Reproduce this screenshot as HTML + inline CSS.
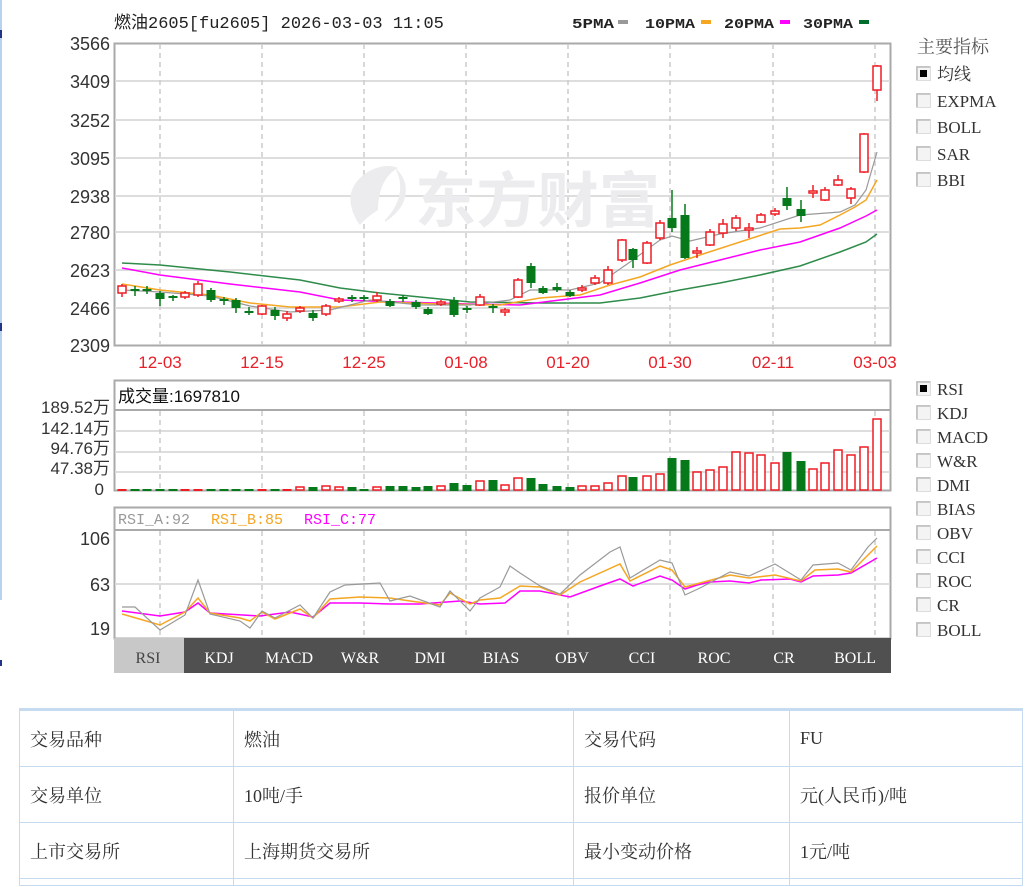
<!DOCTYPE html>
<html><head><meta charset="utf-8">
<style>
html,body{margin:0;padding:0;background:#fff;width:1032px;height:887px;overflow:hidden;position:relative;font-family:"Liberation Sans","Noto Sans CJK SC",sans-serif;}
svg{position:absolute;left:0;top:0}
table{position:absolute;left:19px;top:708px;border-collapse:collapse;font-family:"Liberation Serif","Noto Serif CJK SC",serif;font-size:18px;color:#333;}
td{border:1px solid #c6dbef;height:55px;padding:0 0 0 10px;}
tr:first-child td{border-top:3px solid #c6dbef}
tr:last-child td{height:6px}
</style></head><body>
<svg id="s" width="1032" height="887" xmlns="http://www.w3.org/2000/svg" font-family="Liberation Sans, Noto Sans CJK SC, sans-serif">
<line x1="1" y1="0" x2="1" y2="600" stroke="#b8d2ee" stroke-width="2"/>
<rect x="0" y="30" width="2" height="8" fill="#223388"/>
<rect x="0" y="323" width="2" height="8" fill="#223388"/>
<rect x="0" y="660" width="2" height="6" fill="#223388"/>
<text x="114" y="28" font-size="17" fill="#222" font-family="Liberation Mono, Noto Sans CJK SC, monospace">燃油2605[fu2605] 2026-03-03 11:05</text>
<g font-size="14" font-weight="bold" fill="#222" font-family="Liberation Mono, monospace">
<text x="572" y="28" textLength="42" lengthAdjust="spacingAndGlyphs">5PMA</text><rect x="618" y="20" width="10" height="4" fill="#999"/>
<text x="645" y="28" textLength="50" lengthAdjust="spacingAndGlyphs">10PMA</text><rect x="701" y="20" width="10" height="4" fill="#f5a623"/>
<text x="724" y="28" textLength="50" lengthAdjust="spacingAndGlyphs">20PMA</text><rect x="780" y="20" width="10" height="4" fill="#f0f"/>
<text x="803" y="28" textLength="50" lengthAdjust="spacingAndGlyphs">30PMA</text><rect x="859" y="20" width="10" height="4" fill="#006d2c"/>
</g>
<rect x="114.5" y="43.5" width="776" height="302" fill="#fff" stroke="#aaa" stroke-width="2"/>
<g stroke="#ddd" stroke-width="2">
<line x1="115" y1="81" x2="890" y2="81"/><line x1="115" y1="120" x2="890" y2="120"/><line x1="115" y1="158" x2="890" y2="158"/><line x1="115" y1="196" x2="890" y2="196"/><line x1="115" y1="232" x2="890" y2="232"/><line x1="115" y1="270" x2="890" y2="270"/><line x1="115" y1="308" x2="890" y2="308"/>
</g>
<g id="vdash" stroke="#ccc" stroke-width="1.5" stroke-dasharray="5,4"></g>
<path d="M352 190 C360 170 385 162 398 168 C385 175 378 190 378 210 C370 215 362 222 360 225 C352 215 348 200 352 190Z" fill="#ececee"/>
<path d="M385 220 C400 205 405 185 395 168 C410 180 412 205 385 222Z" fill="#ececee"/>
<text x="415" y="222" font-size="60" font-weight="bold" fill="#ececee" font-family="Noto Sans CJK SC, sans-serif" textLength="245" lengthAdjust="spacingAndGlyphs">东方财富</text>
<g id="main"></g>
<g font-size="18" fill="#333" text-anchor="end">
<text x="110" y="50">3566</text><text x="110" y="88">3409</text><text x="110" y="127">3252</text><text x="110" y="165">3095</text><text x="110" y="203">2938</text><text x="110" y="239">2780</text><text x="110" y="277">2623</text><text x="110" y="315">2466</text><text x="110" y="352">2309</text>
</g>
<g font-size="17" fill="#e8202a" text-anchor="middle">
<text x="160" y="368">12-03</text><text x="262" y="368">12-15</text><text x="364" y="368">12-25</text><text x="466" y="368">01-08</text><text x="568" y="368">01-20</text><text x="670" y="368">01-30</text><text x="773" y="368">02-11</text><text x="875" y="368">03-03</text>
</g>
<rect x="114.5" y="380.5" width="776" height="110" fill="#fff" stroke="#aaa" stroke-width="2"/>
<line x1="115" y1="410" x2="890" y2="410" stroke="#aaa" stroke-width="2"/>
<g stroke="#ddd" stroke-width="2"><line x1="115" y1="431" x2="890" y2="431"/><line x1="115" y1="452" x2="890" y2="452"/><line x1="115" y1="472" x2="890" y2="472"/></g>
<g id="vd2" stroke="#ccc" stroke-width="1.5" stroke-dasharray="5,4"></g>
<text x="118" y="402" font-size="17" fill="#111">成交量:1697810</text>
<g id="vol"></g>
<g font-size="17" fill="#333" text-anchor="end">
<text x="110" y="413">189.52万</text><text x="110" y="434">142.14万</text><text x="110" y="454">94.76万</text><text x="110" y="474">47.38万</text><text x="104" y="495">0</text>
</g>
<rect x="114.5" y="507.5" width="776" height="131" fill="#fff" stroke="#aaa" stroke-width="2"/>
<line x1="115" y1="530" x2="890" y2="530" stroke="#aaa" stroke-width="2"/>
<line x1="115" y1="584" x2="890" y2="584" stroke="#ddd" stroke-width="2"/>
<g id="vd3" stroke="#ccc" stroke-width="1.5" stroke-dasharray="5,4"></g>
<g font-size="15" font-family="Liberation Mono, monospace">
<text x="118" y="524" fill="#999">RSI_A:92</text><text x="211" y="524" fill="#f5a623">RSI_B:85</text><text x="304" y="524" fill="#f0f">RSI_C:77</text>
</g>
<g id="rsi" fill="none" stroke-width="1.5"></g>
<g font-size="18" fill="#333" text-anchor="end">
<text x="110" y="545">106</text><text x="110" y="591">63</text><text x="110" y="635">19</text>
</g>
<rect x="114" y="638" width="777" height="35" fill="#505050"/>
<rect x="114" y="638" width="70" height="35" fill="#c8c8c8"/>
<g font-size="16" fill="#fff" text-anchor="middle" font-family="Liberation Serif, serif">
<text x="148" y="663" fill="#444">RSI</text><text x="219" y="663">KDJ</text><text x="289" y="663">MACD</text><text x="360" y="663">W&amp;R</text><text x="430" y="663">DMI</text><text x="501" y="663">BIAS</text><text x="572" y="663">OBV</text><text x="642" y="663">CCI</text><text x="714" y="663">ROC</text><text x="784" y="663">CR</text><text x="855" y="663">BOLL</text>
</g>
<text x="917" y="53" font-size="18" fill="#555" font-family="Noto Serif CJK SC, serif">主要指标</text>
<g id="chk" font-size="17" fill="#333" font-family="Liberation Serif, Noto Serif CJK SC, serif"></g>
</svg>
<table>
<tr><td style="width:203px">交易品种</td><td style="width:329px">燃油</td><td style="width:205px">交易代码</td><td style="width:222px">FU</td></tr>
<tr><td>交易单位</td><td>10吨/手</td><td>报价单位</td><td>元(人民币)/吨</td></tr>
<tr><td>上市交易所</td><td>上海期货交易所</td><td>最小变动价格</td><td>1元/吨</td></tr>
<tr><td></td><td></td><td></td><td></td></tr>
</table>
<script>
var NS="http://www.w3.org/2000/svg";
function el(p,t,a){var e=document.createElementNS(NS,t);for(var k in a)e.setAttribute(k,a[k]);p.appendChild(e);return e;}
var xs=[160,262,364,466,568,670,773,875];
[["vdash",44,345],["vd2",411,490],["vd3",531,638]].forEach(function(d){var g=document.getElementById(d[0]);xs.forEach(function(x){el(g,"line",{x1:x,y1:d[1],x2:x,y2:d[2]});});});
var M=document.getElementById("main");
function pl(g,pts,c,w){el(g,"polyline",{points:pts.map(function(p){return p.join(",")}).join(" "),fill:"none",stroke:c,"stroke-width":w||1.5});}
pl(M,[[122,263],[160,265],[230,272],[300,280],[340,288],[380,293],[420,297],[470,302],[540,303],[600,303],[640,298],[680,290],[720,283],[760,275],[800,266],[840,252],[866,242],[877,234]],"#2e8b4a");
pl(M,[[122,268],[160,275],[230,284],[300,292],[340,300],[400,302],[470,304],[520,305],[560,300],[600,295],[640,283],[680,270],[720,260],[760,250],[800,242],[840,228],[866,216],[877,210]],"#f0f");
pl(M,[[122,284],[160,290],[210,295],[250,303],[290,307],[340,307],[380,302],[440,304],[500,305],[540,298],[580,295],[610,285],[640,277],[670,265],[700,255],[740,242],[780,229],[800,228],[820,225],[840,215],[855,207],[866,200],[877,180]],"#f5a623");
pl(M,[[122,290],[160,292],[210,296],[250,306],[290,312],[330,310],[370,300],[420,305],[470,305],[510,300],[530,290],[570,290],[600,283],[630,262],[660,240],[672,236],[690,241],[720,234],[760,228],[800,215],[840,212],[855,205],[866,190],[877,152]],"#999",1.2);
var C=[[122,286,293,284,297,'r'],[135,289,291,286,296,'g'],[147,289,291,286,294,'g'],[160,293,299,291,306,'g'],[173,296,298,295,301,'g'],[185,293,297,291,299,'r'],[198,284,295,281,297,'r'],[211,290,300,288,302,'g'],[224,299,301,297,305,'g'],[236,300,308,298,313,'g'],[249,311,313,307,315,'g'],[262,306,314,305,315,'r'],[275,310,316,307,320,'g'],[287,314,318,311,321,'r'],[300,308,311,306,313,'r'],[313,313,318,310,321,'g'],[326,306,314,304,316,'r'],[339,299,301,297,303,'r'],[352,297,299,295,302,'g'],[364,297,299,295,301,'g'],[377,296,300,292,302,'r'],[390,301,306,299,307,'g'],[403,297,299,295,302,'g'],[416,302,307,300,309,'g'],[428,309,314,307,315,'g'],[441,302,304,300,306,'r'],[454,300,315,297,317,'g'],[467,308,310,306,313,'g'],[480,297,305,294,306,'r'],[493,306,308,304,313,'g'],[505,310,312,308,316,'r'],[518,280,297,278,298,'r'],[531,266,283,263,288,'g'],[543,288,293,286,294,'g'],[557,287,290,283,292,'g'],[570,292,296,290,297,'g'],[582,288,290,285,292,'r'],[595,278,283,275,285,'r'],[608,270,283,266,285,'r'],[622,240,260,239,262,'r'],[633,249,260,248,268,'g'],[647,243,263,241,264,'r'],[660,223,238,220,240,'r'],[672,218,228,190,232,'g'],[685,215,258,204,259,'g'],[697,251,253,247,258,'r'],[710,232,245,229,246,'r'],[723,224,233,219,238,'r'],[736,218,228,215,231,'r'],[749,228,230,223,238,'r'],[761,215,222,213,223,'r'],[775,211,214,208,216,'r'],[787,198,206,187,210,'g'],[801,209,216,200,222,'g'],[813,191,193,185,198,'r'],[825,190,200,187,201,'r'],[838,180,185,175,186,'r'],[851,189,198,187,204,'r'],[864,134,172,133,173,'r'],[877,66,90,65,101,'r']];
C.forEach(function(c){var col=c[5]=='r'?'#ee1c24':'#067a1a';
el(M,"line",{x1:c[0],y1:c[3],x2:c[0],y2:c[4],stroke:col,"stroke-width":1.5});
var h=Math.max(c[2]-c[1],2);
if(c[5]=='r')el(M,"rect",{x:c[0]-4,y:c[1],width:8,height:h,fill:"#fff",stroke:col,"stroke-width":1.5});
else el(M,"rect",{x:c[0]-4.5,y:c[1],width:9,height:h,fill:col});});
var V=document.getElementById("vol");
var vt={288:487,300:487,313:487,326:486,339:487,352:487,364:489,377:487,390:486,403:486,416:487,428:486,441:486,454:483,467:485,480:481,493:480,505:485,518:478,531:478,543:484,557:486,570:487,582:486,595:486,608:483,622:476,633:477,647:476,660:474,672:458,685:460,697:472,710:470,723:467,736:452,749:453,761:455,775:463,787:452,801:461,813:469,825:463,838:450,851:455,864:447,877:419};
C.forEach(function(c){var col=c[5]=='r'?'#ee1c24':'#067a1a';var t=vt[c[0]]||489;var h=491-t;
if(c[5]=='r'&&h>3)el(V,"rect",{x:c[0]-4,y:t,width:8,height:h-1,fill:"#fff",stroke:col,"stroke-width":1.5});
else el(V,"rect",{x:c[0]-4.5,y:t,width:9,height:h,fill:col});});
var R=document.getElementById("rsi");
pl(R,[[122,611],[160,616],[185,612],[198,603],[210,613],[260,616],[290,612],[313,617],[330,603],[360,603],[390,604],[420,604],[460,601],[480,604],[505,603],[520,591],[540,591],[570,597],[600,586],[620,579],[633,586],[660,576],[672,580],[685,589],[697,585],[710,582],[730,581],[749,583],[761,580],[790,579],[801,582],[813,576],[838,575],[851,573],[877,558]],"#f0f");
pl(R,[[122,614],[160,625],[185,612],[198,598],[210,613],[240,618],[250,621],[262,612],[275,619],[300,609],[313,618],[330,599],[360,597],[390,598],[410,601],[440,605],[450,593],[470,604],[480,600],[500,598],[510,592],[520,586],[540,587],[560,595],[580,582],[620,564],[630,581],[660,566],[672,570],[685,587],[700,583],[730,575],[749,578],[775,575],[801,581],[815,570],[838,569],[851,572],[877,546]],"#f5a623");
pl(R,[[122,607],[135,607],[160,630],[185,615],[198,580],[210,614],[240,621],[250,628],[262,611],[275,618],[300,605],[313,618],[330,592],[345,585],[380,583],[390,601],[410,596],[440,607],[450,591],[470,611],[480,598],[500,587],[510,566],[520,573],[540,586],[560,594],[580,575],[610,552],[620,547],[630,578],[660,560],[672,563],[685,595],[700,588],[730,572],[749,576],[775,564],[801,580],[813,565],[838,563],[851,570],[868,547],[877,538]],"#999",1.2);
var K=document.getElementById("chk");
[["均线",74,1],["EXPMA",101],["BOLL",127],["SAR",154],["BBI",180],["RSI",389,1],["KDJ",413],["MACD",437],["W&R",461],["DMI",485],["BIAS",509],["OBV",533],["CCI",557],["ROC",581],["CR",605],["BOLL",630]].forEach(function(it){
var y=it[1];el(K,"rect",{x:916.5,y:y-7.5,width:14,height:14,fill:"#f4f4f4",stroke:"#ddd"});
el(K,"path",{d:"M917 "+(y+6)+"V"+(y-7)+"H930",stroke:"#bbb",fill:"none","stroke-width":1.5});
if(it[2])el(K,"rect",{x:920,y:y-4,width:7,height:7,fill:"#000"});
var t=el(K,"text",{x:937,y:y+6});t.textContent=it[0];});
</script>
</body></html>
